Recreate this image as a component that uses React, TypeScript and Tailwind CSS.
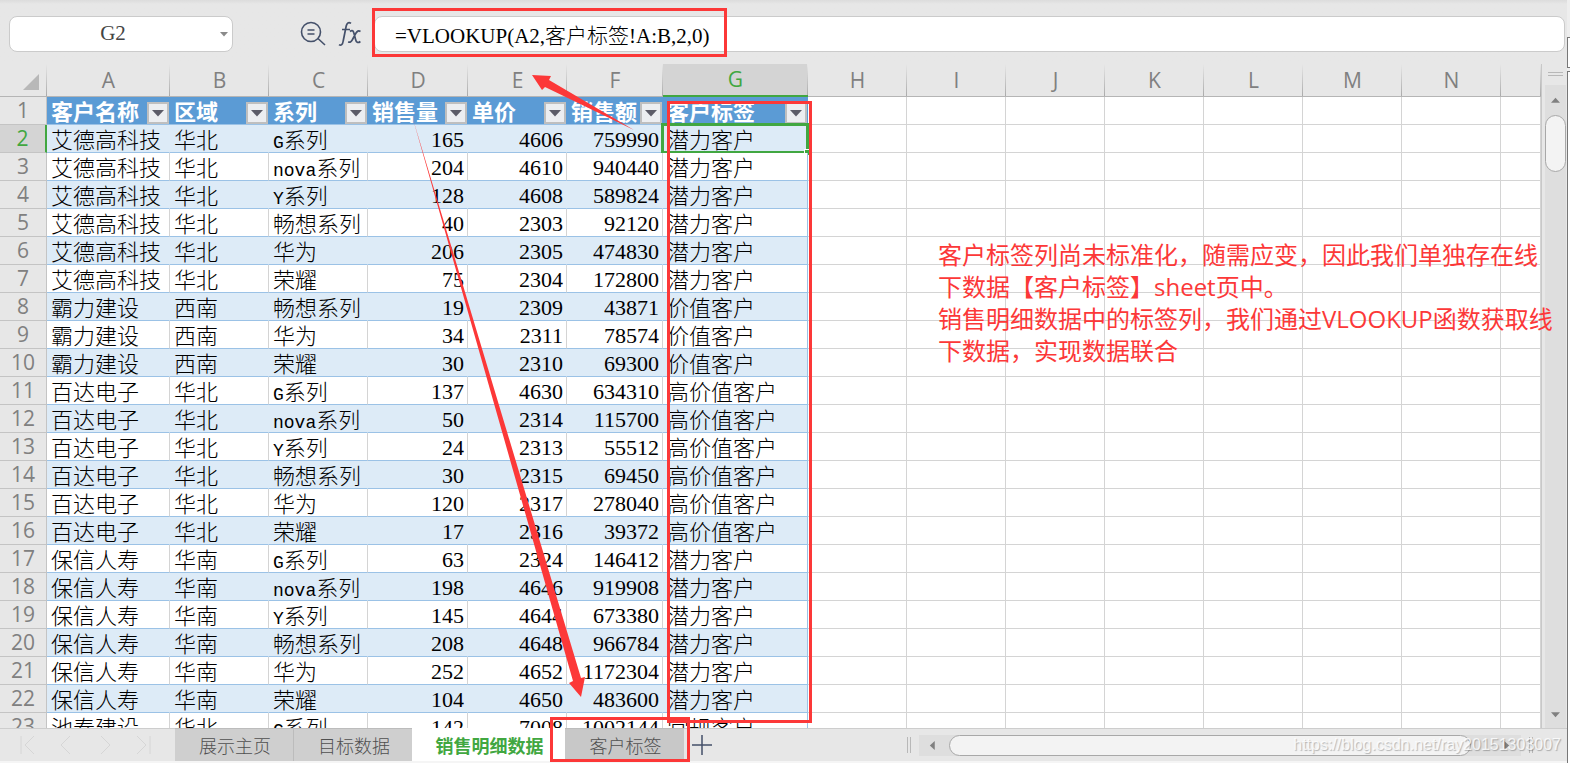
import { Fragment } from 'react';

type Row = [string, string, string, number, number, number, string];

const ROWS: Row[] = [
    ['艾德高科技', '华北', 'G系列', 165, 4606, 759990, '潜力客户'],
    ['艾德高科技', '华北', 'nova系列', 204, 4610, 940440, '潜力客户'],
    ['艾德高科技', '华北', 'Y系列', 128, 4608, 589824, '潜力客户'],
    ['艾德高科技', '华北', '畅想系列', 40, 2303, 92120, '潜力客户'],
    ['艾德高科技', '华北', '华为', 206, 2305, 474830, '潜力客户'],
    ['艾德高科技', '华北', '荣耀', 75, 2304, 172800, '潜力客户'],
    ['霸力建设', '西南', '畅想系列', 19, 2309, 43871, '价值客户'],
    ['霸力建设', '西南', '华为', 34, 2311, 78574, '价值客户'],
    ['霸力建设', '西南', '荣耀', 30, 2310, 69300, '价值客户'],
    ['百达电子', '华北', 'G系列', 137, 4630, 634310, '高价值客户'],
    ['百达电子', '华北', 'nova系列', 50, 2314, 115700, '高价值客户'],
    ['百达电子', '华北', 'Y系列', 24, 2313, 55512, '高价值客户'],
    ['百达电子', '华北', '畅想系列', 30, 2315, 69450, '高价值客户'],
    ['百达电子', '华北', '华为', 120, 2317, 278040, '高价值客户'],
    ['百达电子', '华北', '荣耀', 17, 2316, 39372, '高价值客户'],
    ['保信人寿', '华南', 'G系列', 63, 2324, 146412, '潜力客户'],
    ['保信人寿', '华南', 'nova系列', 198, 4646, 919908, '潜力客户'],
    ['保信人寿', '华南', 'Y系列', 145, 4644, 673380, '潜力客户'],
    ['保信人寿', '华南', '畅想系列', 208, 4648, 966784, '潜力客户'],
    ['保信人寿', '华南', '华为', 252, 4652, 1172304, '潜力客户'],
    ['保信人寿', '华南', '荣耀', 104, 4650, 483600, '潜力客户'],
    ['池春建设', '华北', 'G系列', 142, 7008, 1002144, '常规客户'],
];

const FIELDS = ['客户名称', '区域', '系列', '销售量', '单价', '销售额', '客户标签'];
const LETTERS = ['A', 'B', 'C', 'D', 'E', 'F', 'G', 'H', 'I', 'J', 'K', 'L', 'M', 'N', ''];
const EMPTY_COLUMNS = LETTERS.slice(7);
const COLUMN_WIDTHS = [
    'w-[47px]', 'w-[123px]', 'w-[99px]', 'w-[99px]', 'w-[100px]', 'w-[99px]', 'w-24', 'w-[145px]',
    'w-[99px]', 'w-[99px]', 'w-[99px]', 'w-[99px]', 'w-[99px]', 'w-[99px]', 'w-[99px]', '',
];

const Triangle = ({ className, d }: { className: string; d: string }) => (
    <svg viewBox="0 0 10 10" className={className} fill="currentColor" aria-hidden="true">
        <path d={d} />
    </svg>
);

const UP = 'M5 2L10 7.5H0z';
const DOWN = 'M0 2.5H10L5 8z';
const LEFT = 'M2 5L7.5 0V10z';
const RIGHT = 'M8 5L2.5 0V10z';

// Latin letters take half the width of a Chinese character
const CellText = ({ text }: { text: string }) => (
    <>
        {text.split(/([A-Za-z]+)/).map((part, i) => (
            <Fragment key={i}>
                {i % 2 ? <span className="font-['Liberation_Mono',monospace] text-lg leading-none">{part}</span> : part}
            </Fragment>
        ))}
    </>
);

const FormulaBar = () => (
    <div className="flex h-16 shrink-0 items-start bg-linear-to-b from-[#dcdcdc] to-[#e7e7e7] to-[4px] pt-4 pl-[9px] pr-[2px]">
        <div className="flex h-9 w-56 items-center rounded-lg border border-[#cbcbcb] bg-white pr-1">
            <input
                aria-label="名称框"
                defaultValue="G2"
                className="min-w-0 flex-1 pr-1 text-center font-['Liberation_Serif',serif] text-[21px] text-[#444] outline-none"
            />
            <button type="button" aria-label="选择名称" className="text-[#8a8a8a]">
                <Triangle className="size-2" d={DOWN} />
            </button>
        </div>
        <button type="button" aria-label="查找" className="mt-1 ml-[67px] text-[#44506a]">
            <svg viewBox="0 0 26 26" className="size-[26px]" fill="none" stroke="currentColor" strokeWidth="1.6">
                <circle cx="11" cy="12" r="9.5" />
                <path d="M7.5 10h7M7.5 14h7M18 18.5l7 6.5" />
            </svg>
        </button>
        <button type="button" aria-label="插入函数" className="mt-1 ml-3 text-[#44506a]">
            <svg viewBox="0 0 24 28" className="h-7 w-6" fill="none" stroke="currentColor" strokeWidth="1.7">
                <path d="M13 3.4C10.600 1.600 8.800 3 8.200 6L5.200 21C4.700 24.500 3 26 1 24.600M4 9.500h8M12 11.500c2.400-2 3.400-.5 4 2l1.600 6c.6 2.800 2.200 4 4.800 2M22.500 11.500c-2-1.300-3.400-.4-4.800 2l-3.200 6c-1.500 2.600-2.600 3.300-4.300 2.300" />
            </svg>
        </button>
        <input
            aria-label="编辑栏"
            defaultValue="=VLOOKUP(A2,客户标签!A:B,2,0)"
            className="ml-3 h-9 min-w-0 flex-1 rounded-lg border border-[#cbcbcb] bg-white pl-5 font-['Liberation_Serif','Noto_Sans_CJK_SC',serif] text-[21px] font-light text-black outline-none"
        />
    </div>
);

const Sheet = () => (
    <div className="min-w-0 flex-1 overflow-hidden border-r border-[#c8c8c8] bg-white">
        <table className="w-full table-fixed border-separate border-spacing-0 whitespace-nowrap font-['Liberation_Serif','Noto_Sans_CJK_SC',serif] text-[22px] leading-none font-light text-black">
            <colgroup>
                {COLUMN_WIDTHS.map((width, i) => <col key={i} className={width} />)}
            </colgroup>
            <thead className="font-['Open_Sans',sans-serif] text-[21px] text-[#808080]">
                <tr className="h-[33px]">
                    <td className="border-b border-[#b5b5b5] bg-[#e7e7e7] bg-[linear-gradient(to_bottom,#e7e7e7,#aaa)] bg-[length:1px_100%] bg-right bg-no-repeat p-0">
                        <svg viewBox="0 0 16 16" className="mt-1 ml-[23px] size-4" fill="#b8b8b8" aria-hidden="true">
                            <path d="M16 0v16H0z" />
                        </svg>
                    </td>
                    {LETTERS.map((letter, i) => (
                        <th
                            key={i}
                            className={`bg-[linear-gradient(to_bottom,#e7e7e7,#aaa)] bg-[length:1px_100%] bg-right bg-no-repeat p-0 font-normal ${
                                letter === 'G'
                                    ? 'border-b-2 border-[#41a741] bg-[#d4d4d4] text-[#41a741]'
                                    : 'border-b border-[#b5b5b5] bg-[#e7e7e7]'
                            }`}
                        >
                            {letter}
                        </th>
                    ))}
                </tr>
            </thead>
            <tbody>
                <tr className="h-7">
                    <th className="border-r border-b border-[#c4c4c4] bg-[#e7e7e7] p-0 font-['Open_Sans',sans-serif] text-[21px] font-normal text-[#808080]">1</th>
                    {FIELDS.map(field => (
                        <th key={field} className="border-b border-[#9bc2e6] bg-[#5b9bd5] p-0 pl-1 text-left font-bold text-white">
                            <div className="flex items-center justify-between pt-1 pr-[1px]">
                                {field}
                                <button type="button" aria-label={`筛选${field}`} className="flex size-[22px] items-center justify-center border-2 border-[#bfbfbf] bg-[#eceef1] text-[#5c5c68]">
                                    <Triangle className="size-3" d={DOWN} />
                                </button>
                            </div>
                        </th>
                    ))}
                    {EMPTY_COLUMNS.map((_, i) => <td key={i} className="border-r border-b border-[#d4d4d4]" />)}
                </tr>
                {ROWS.map((row, r) => {
                    const banded = r % 2 === 0;
                    return (
                        <tr key={r} className="h-7">
                            <th
                                className={`border-b border-[#c4c4c4] p-0 font-['Open_Sans',sans-serif] text-[21px] font-normal ${
                                    r === 0
                                        ? 'border-r-2 border-r-[#41a741] bg-[#d4d4d4] text-[#41a741]'
                                        : 'border-r bg-[#e7e7e7] text-[#808080]'
                                }`}
                            >
                                {r + 2}
                            </th>
                            {row.map((value, c) => (
                                <td
                                    key={c}
                                    className={`relative border-r border-b border-b-[#9bc2e6] p-0 ${
                                        typeof value === 'number' ? 'pt-[2px] pr-[3px] text-right' : 'pt-1 pl-1'
                                    } ${banded ? 'bg-[#ddebf7]' : 'bg-white'} ${
                                        c === 6 ? 'border-r-[#9bc2e6]' : banded ? 'border-r-[#ddebf7]' : 'border-r-[#d4d4d4]'
                                    }`}
                                >
                                    {typeof value === 'number' ? value : <CellText text={value} />}
                                    {r === 0 && c === 6 && (
                                        <span className="absolute -inset-[2px] border-3 border-[#41a741]">
                                            <span className="absolute -right-1 -bottom-1 size-[6px] border-t border-l border-white bg-[#41a741]" />
                                        </span>
                                    )}
                                </td>
                            ))}
                            {EMPTY_COLUMNS.map((_, i) => <td key={i} className="border-r border-b border-[#d4d4d4]" />)}
                        </tr>
                    );
                })}
            </tbody>
        </table>
    </div>
);

const VerticalScroll = () => (
    <div className="flex w-[25px] shrink-0 flex-col bg-[#e7e7e7] pr-[1px] pl-[3px]">
        <div className="mt-2 mb-[9px] ml-[3px] h-1 w-[15px] border-y border-[#b8b8b8]" />
        <div className="flex flex-1 flex-col items-center bg-[#dedede] text-[#808080]">
            <button type="button" aria-label="向上滚动" className="flex h-[30px] items-center">
                <Triangle className="size-[9px]" d={UP} />
            </button>
            <div className="h-[57px] w-full rounded-full border border-[#a8a8a8] bg-[#f3f3f3]" />
            <button type="button" aria-label="向下滚动" className="mt-auto mb-[9px]">
                <Triangle className="size-[9px]" d={DOWN} />
            </button>
        </div>
    </div>
);

const NAV = [
    { label: '第一个', d: 'M1 1v18M14 1L5 10l9 9' },
    { label: '上一个', d: 'M12 1L3 10l9 9' },
    { label: '下一个', d: 'M4 1l9 9-9 9' },
    { label: '最后一个', d: 'M2 1l9 9-9 9M15 1v18' },
];

const TabBar = () => (
    <div className="flex h-[35px] shrink-0 border-b-2 border-[#f5f5f5] bg-[#e7e7e7] font-['Noto_Sans_CJK_SC',sans-serif] text-lg text-[#505050]">
        <div className="flex w-[175px] items-center justify-between border-t border-[#cdcdcd] pr-6 pl-5 text-[#d6d6d6]">
            {NAV.map(({ label, d }) => (
                <button key={label} type="button" aria-label={label}>
                    <svg viewBox="0 0 16 20" className="h-5 w-4" fill="none" stroke="currentColor">
                        <path d={d} />
                    </svg>
                </button>
            ))}
        </div>
        <button type="button" className="w-[119px] border-t border-r border-[#bcbcbc] bg-[#cfcfcf] pl-[2px] font-light">展示主页</button>
        <button type="button" className="w-[118px] border-t border-[#bcbcbc] bg-[#cfcfcf] pl-[2px] font-light">目标数据</button>
        <button type="button" className="w-[153px] bg-white pl-[2px] font-bold text-[#41a741]">销售明细数据</button>
        <button type="button" className="w-[119px] border-t border-[#bcbcbc] bg-[#c8c8c8] pl-[2px] font-light">客户标签</button>
        <div className="flex min-w-0 flex-1 items-center border-t border-[#cdcdcd]">
            <button type="button" aria-label="新建工作表" className="ml-2 text-[#44506a]">
                <svg viewBox="0 0 20 20" className="size-5" fill="none" stroke="currentColor" strokeWidth="1.5">
                    <path d="M10 0v20M0 10h20" />
                </svg>
            </button>
            <div className="ml-auto h-4 w-1 border-x border-[#b8b8b8]" />
            <div className="ml-2 flex h-[21px] w-[602px] items-center bg-[#dedede] text-[#808080]">
                <button type="button" aria-label="向左滚动" className="flex w-[30px] justify-center pr-1">
                    <Triangle className="size-[9px]" d={LEFT} />
                </button>
                <div className="h-[21px] flex-1 rounded-full border border-[#a8a8a8] bg-[#f3f3f3]" />
                <button type="button" aria-label="向右滚动" className="flex w-[50px] justify-center pl-5">
                    <Triangle className="size-[9px]" d={RIGHT} />
                </button>
            </div>
            <div className="mr-[34px] ml-2 h-4 w-1 border-x border-[#b8b8b8]" />
        </div>
    </div>
);

// Red marks drawn over the sheet
const Annotations = () => (
    <div className="pointer-events-none absolute inset-0">
        <div className="absolute top-2 left-[372px] h-[49px] w-[355px] border-3 border-[#fc3838]" />
        <div className="absolute top-[101px] left-[667px] h-[622px] w-[145px] border-3 border-[#fc3838]" />
        <div className="absolute top-[717px] left-[550px] h-[45px] w-[140px] border-3 border-[#fc3838]" />
        <svg className="absolute inset-0 size-full" fill="#fc3838" aria-hidden="true">
            <path d="M532 75L551 76L549 80L634 130L545 87L542 90Z" />
            <path d="M413 119L581 678L585 677L581 697L569 683L573 681Z" />
        </svg>
        <p className="absolute top-[239px] left-[938px] font-['Open_Sans','Noto_Sans_CJK_SC',sans-serif] text-2xl leading-8 whitespace-nowrap text-[#fc3838]">
            客户标签列尚未标准化，随需应变，因此我们单独存在线<br />
            下数据【客户标签】sheet页中。<br />
            销售明细数据中的标签列，我们通过VLOOKUP函数获取线<br />
            下数据，实现数据联合
        </p>
        <span className="absolute right-[9px] bottom-[6px] font-['Liberation_Sans',sans-serif] text-base text-white/80 [text-shadow:1px_1px_1px_#0004]">
            https://blog.csdn.net/ray20151303007
        </span>
    </div>
);

export default function App() {
    return (
        <div className="relative flex h-screen overflow-hidden bg-[#e7e7e7]">
            <div className="flex min-w-0 flex-1 flex-col">
                <FormulaBar />
                <div className="flex min-h-0 flex-1">
                    <Sheet />
                    <VerticalScroll />
                </div>
                <TabBar />
            </div>
            <div className="flex w-[3px] shrink-0 flex-col bg-[#eee]">
                <div className="mt-[37px] h-[31px] border-y border-l border-[#777] bg-white" />
                <div className="mt-[3px] flex-1 border-t border-l border-[#777] bg-white" />
            </div>
            <Annotations />
        </div>
    );
}
